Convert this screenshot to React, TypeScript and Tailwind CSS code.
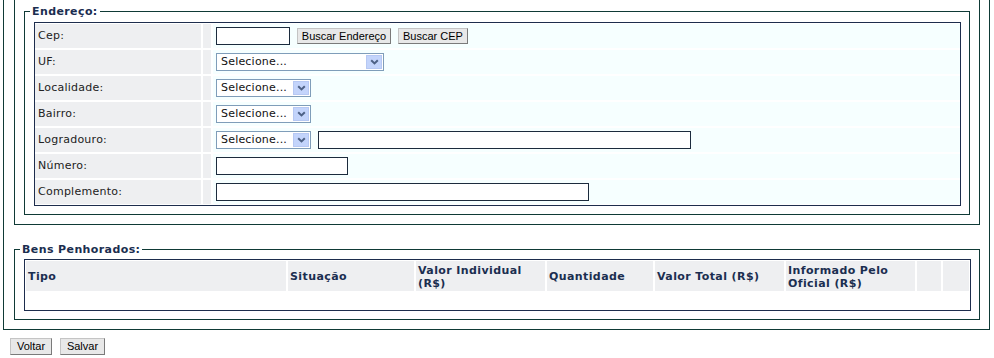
import React from 'react';

function Chevron() {
  return (
    <svg width="9" height="6" viewBox="0 0 9 6">
      <path d="M1.2 1.2 L4.5 4.4 L7.8 1.2" stroke="#4d6185" strokeWidth="2" fill="none" />
    </svg>
  );
}

function Select({ w }: { w: string }) {
  return (
    <div className={`${w} h-[18px] border border-[#7f9db9] bg-white flex items-center justify-between pl-[4px] pr-[1px] text-[11px] text-[#111] tracking-[0.2px]`}>
      <span className="leading-[14px]">Selecione...</span>
      <span className="w-[16px] h-[14px] bg-[#c3d4fb] border border-[#b6c8f3] flex items-center justify-center">
        <Chevron />
      </span>
    </div>
  );
}

function TextBox({ w }: { w: string }) {
  return <div className={`${w} h-[18px] border border-[#1c2b3d] bg-white`} />;
}

function Btn({ children, w }: { children: React.ReactNode; w: string }) {
  return (
    <button
      type="button"
      className={`${w} h-[16px] bg-[#e8e8e8] border border-[#c4c4c4] border-r-[#7a7a7a] border-b-[#7a7a7a] text-[11px] leading-[13px] text-black font-['Liberation_Sans',sans-serif] flex items-center justify-center`}
    >
      {children}
    </button>
  );
}

function Row({ label, children }: { label: string; children?: React.ReactNode }) {
  return (
    <>
      <div className="h-[24px] bg-[#eeeff1] pl-[3px] pt-[1px] flex items-center text-[11px] tracking-[0.25px] text-[#222]">{label}</div>
      <div className="h-[24px] bg-[#eeeff1]" />
      <div className="h-[24px] bg-[#f6ffff] pl-[3px] flex items-center gap-[7px]">{children}</div>
    </>
  );
}

const headers = ['Tipo', 'Situação', 'Valor Individual (R$)', 'Quantidade', 'Valor Total (R$)', 'Informado Pelo Oficial (R$)', '', ''];

export default function App() {
  return (
    <div className="w-[994px] h-[358px] overflow-hidden bg-white font-['DejaVu_Sans',sans-serif]">
      <div className="mt-[-20px] ml-[3px] w-[987px] border border-[#0f3a36] pt-[9px] pl-[10px] pr-[9px] pb-[9px]">
        <div className="border border-[#0f3a36] pt-[13px] pl-[9px] pr-[9px] pb-[9px]">
          <fieldset className="border border-[#0f3a36] min-w-0">
            <legend className="ml-[5px] px-[2px] text-[11px] leading-[15px] font-bold tracking-[0.4px] text-[#1b2e50]">Endereço:</legend>
            <div className="pl-[9px] pr-[8px] pt-[3px] pb-[8px]">
              <div className="border border-[#1d2d4d] bg-white py-[1px] grid grid-cols-[166px_8px_1fr] gap-[2px]">
                <Row label="Cep:">
                  <TextBox w="w-[74px]" />
                  <Btn w="w-[94px]">Buscar Endereço</Btn>
                  <Btn w="w-[70px]">Buscar CEP</Btn>
                </Row>
                <Row label="UF:">
                  <Select w="w-[168px]" />
                </Row>
                <Row label="Localidade:">
                  <Select w="w-[95px]" />
                </Row>
                <Row label="Bairro:">
                  <Select w="w-[95px]" />
                </Row>
                <Row label="Logradouro:">
                  <Select w="w-[95px]" />
                  <TextBox w="w-[373px]" />
                </Row>
                <Row label="Número:">
                  <TextBox w="w-[132px]" />
                </Row>
                <Row label="Complemento:">
                  <TextBox w="w-[373px]" />
                </Row>
              </div>
            </div>
          </fieldset>
        </div>
        <fieldset className="mt-[17px] border border-[#0f3a36] min-w-0">
          <legend className="ml-[5px] px-[2px] text-[11px] leading-[15px] font-bold tracking-[0.4px] text-[#1b2e50]">Bens Penhorados:</legend>
          <div className="pl-[9px] pr-[8px] pt-[2px] pb-[8px]">
            <div className="border border-[#1d2d4d] bg-white pt-[1px] px-[1px]">
              <div className="grid grid-cols-[260px_126px_129px_106px_129px_129px_24px_1fr] gap-[2px]">
                {headers.map((h, i) => (
                  <div key={i} className="h-[30px] bg-[#eeeff1] pl-[2px] pr-[2px] pt-[1px] flex items-center text-[11px] leading-[13px] font-bold tracking-[0.4px] text-[#1b2e50]">
                    {h}
                  </div>
                ))}
              </div>
              <div className="h-[19px]" />
            </div>
          </div>
        </fieldset>
      </div>
      <div className="mt-[8px] ml-[10px] flex gap-[8px]">
        <Btn w="w-[42px] h-[17px]">Voltar</Btn>
        <Btn w="w-[45px] h-[17px]">Salvar</Btn>
      </div>
    </div>
  );
}
